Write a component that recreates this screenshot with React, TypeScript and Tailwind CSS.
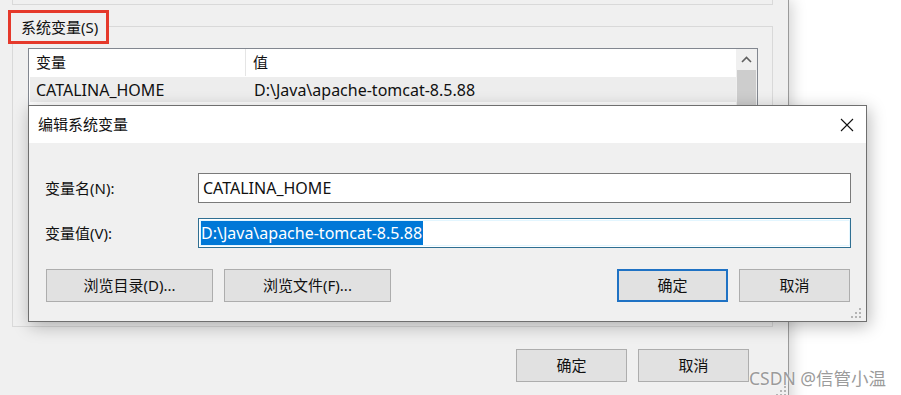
import React from "react";

function Grip() {
  const dots = [
    [8, 0],
    [4, 4],
    [8, 4],
    [0, 8],
    [4, 8],
    [8, 8],
  ];
  return (
    <svg width="11" height="11" viewBox="0 0 11 11">
      {dots.map(([x, y], i) => (
        <rect key={i} x={x} y={y} width="2" height="2" fill="#b4b4b4" />
      ))}
    </svg>
  );
}

function Btn({ label, w, primary }: { label: string; w: string; primary?: boolean }) {
  return (
    <div
      className={
        "h-[33px] flex items-center justify-center bg-[#e1e1e1] text-[15px] text-[#111] " +
        w +
        (primary ? " border-2 border-[#1f72c4]" : " border border-[#adadad]")
      }
    >
      {label}
    </div>
  );
}

export default function App() {
  return (
    <div className="relative w-[901px] h-[395px] overflow-hidden bg-white font-['Noto_Sans','Noto_Sans_CJK_SC',sans-serif] text-[#111]">
      {/* Background window */}
      <div className="w-[789px] h-[420px] bg-[#f0f0f0] border-r border-[#9a9a9a] shadow-[3px_0_14px_rgba(0,0,0,0.18)] flex flex-col">
        {/* Previous group box remnant */}
        <div className="ml-[12px] w-[761px] h-[5px] border-b border-l border-r border-[#d9d9d9]" />
        {/* System variables group */}
        <div className="mt-[21px] ml-[12px] w-[761px] h-[301px] border border-[#d9d9d9] flex flex-col">
          <div className="-mt-[17px] -ml-[5px] w-[101px] h-[34px] border-[3px] border-[#e5392b] bg-[#f0f0f0] flex items-center pl-[10px] text-[15px] leading-none">
            系统变量(S)
          </div>
          <div className="mt-[4px] ml-[15px] w-[730px] h-[230px] border border-[#828790] bg-white flex">
            <div className="flex-1 flex flex-col">
              <div className="h-[28px] flex text-[15px] border-b border-white">
                <div className="w-[217px] pl-[7px] flex items-center border-r border-[#e5e5e5]">变量</div>
                <div className="flex-1 pl-[7px] flex items-center">值</div>
              </div>
              <div className="h-[25px] ml-[1px] flex text-[16px] bg-[#ededed]">
                <div className="w-[216px] pl-[6px] flex items-center">CATALINA_HOME</div>
                <div className="flex-1 pl-[8px] flex items-center">D:\Java\apache-tomcat-8.5.88</div>
              </div>
            </div>
            <div className="w-[21px] bg-[#f0f0f0] flex flex-col">
              <div className="h-[21px] flex items-center justify-center">
                <svg width="11" height="7" viewBox="0 0 11 7">
                  <path d="M1 6 L5.5 1.5 L10 6" fill="none" stroke="#606060" strokeWidth="1.6" />
                </svg>
              </div>
              <div className="mx-[1px] h-[120px] bg-[#cdcdcd]" />
            </div>
          </div>
        </div>
        {/* Bottom buttons of background window */}
        <div className="mt-[22px] flex justify-end gap-[11px] pr-[39px]">
          <Btn label="确定" w="w-[111px]" />
          <Btn label="取消" w="w-[111px]" />
        </div>
        <div className="flex justify-end pr-[1px] mt-[4px]">
          <Grip />
        </div>
      </div>

      {/* Edit dialog (window on desktop) */}
      <div className="absolute left-[28px] top-[105px] w-[839px] h-[217px] border border-[#6f6f6f] bg-[#f0f0f0] shadow-[2px_4px_16px_rgba(0,0,0,0.28)] flex flex-col">
        <div className="h-[37px] bg-white flex items-center justify-between pl-[9px] pr-[10px] text-[15px]">
          <span>编辑系统变量</span>
          <svg width="14" height="14" viewBox="0 0 14 14" className="mr-[2px]">
            <path d="M1 1 L13 13 M13 1 L1 13" stroke="#111" strokeWidth="1.1" fill="none" />
          </svg>
        </div>
        <div className="flex-1 flex flex-col pl-[16px] pr-[15px] pt-[30px]">
          <div className="flex items-center h-[30px]">
            <div className="w-[153px] text-[15px]">变量名(N):</div>
            <div className="flex-1 h-[30px] bg-white border border-[#7a7a7a] flex items-center pl-[4px] text-[16px]">
              CATALINA_HOME
            </div>
          </div>
          <div className="flex items-center h-[30px] mt-[15px]">
            <div className="w-[153px] text-[15px]">变量值(V):</div>
            <div className="flex-1 h-[30px] bg-white border border-[#2f6f92] flex items-center pl-[1px] text-[16px]">
              <div className="h-[26px] border border-[#e3f6ff] flex items-center w-full">
                <span className="bg-[#0078d7] text-white h-[24px] flex items-center pr-[1px]">
                  D:\Java\apache-tomcat-8.5.88
                </span>
              </div>
            </div>
          </div>
          <div className="flex items-center mt-[21px]">
            <div className="flex gap-[11px] ml-[1px]">
              <Btn label="浏览目录(D)..." w="w-[167px]" />
              <Btn label="浏览文件(F)..." w="w-[167px]" />
            </div>
            <div className="flex-1" />
            <div className="flex gap-[11px] mr-[1px]">
              <Btn label="确定" w="w-[111px]" primary />
              <Btn label="取消" w="w-[111px]" />
            </div>
          </div>
          <div className="flex justify-end -mr-[11px] mt-[6px]">
            <Grip />
          </div>
        </div>
      </div>

      {/* Watermark */}
      <div className="absolute left-[749px] top-[366px] text-[17.5px] leading-[24px] text-[#9b9b9b] [text-shadow:0_0_2px_#ffffff]">
        CSDN @信管小温
      </div>
    </div>
  );
}
